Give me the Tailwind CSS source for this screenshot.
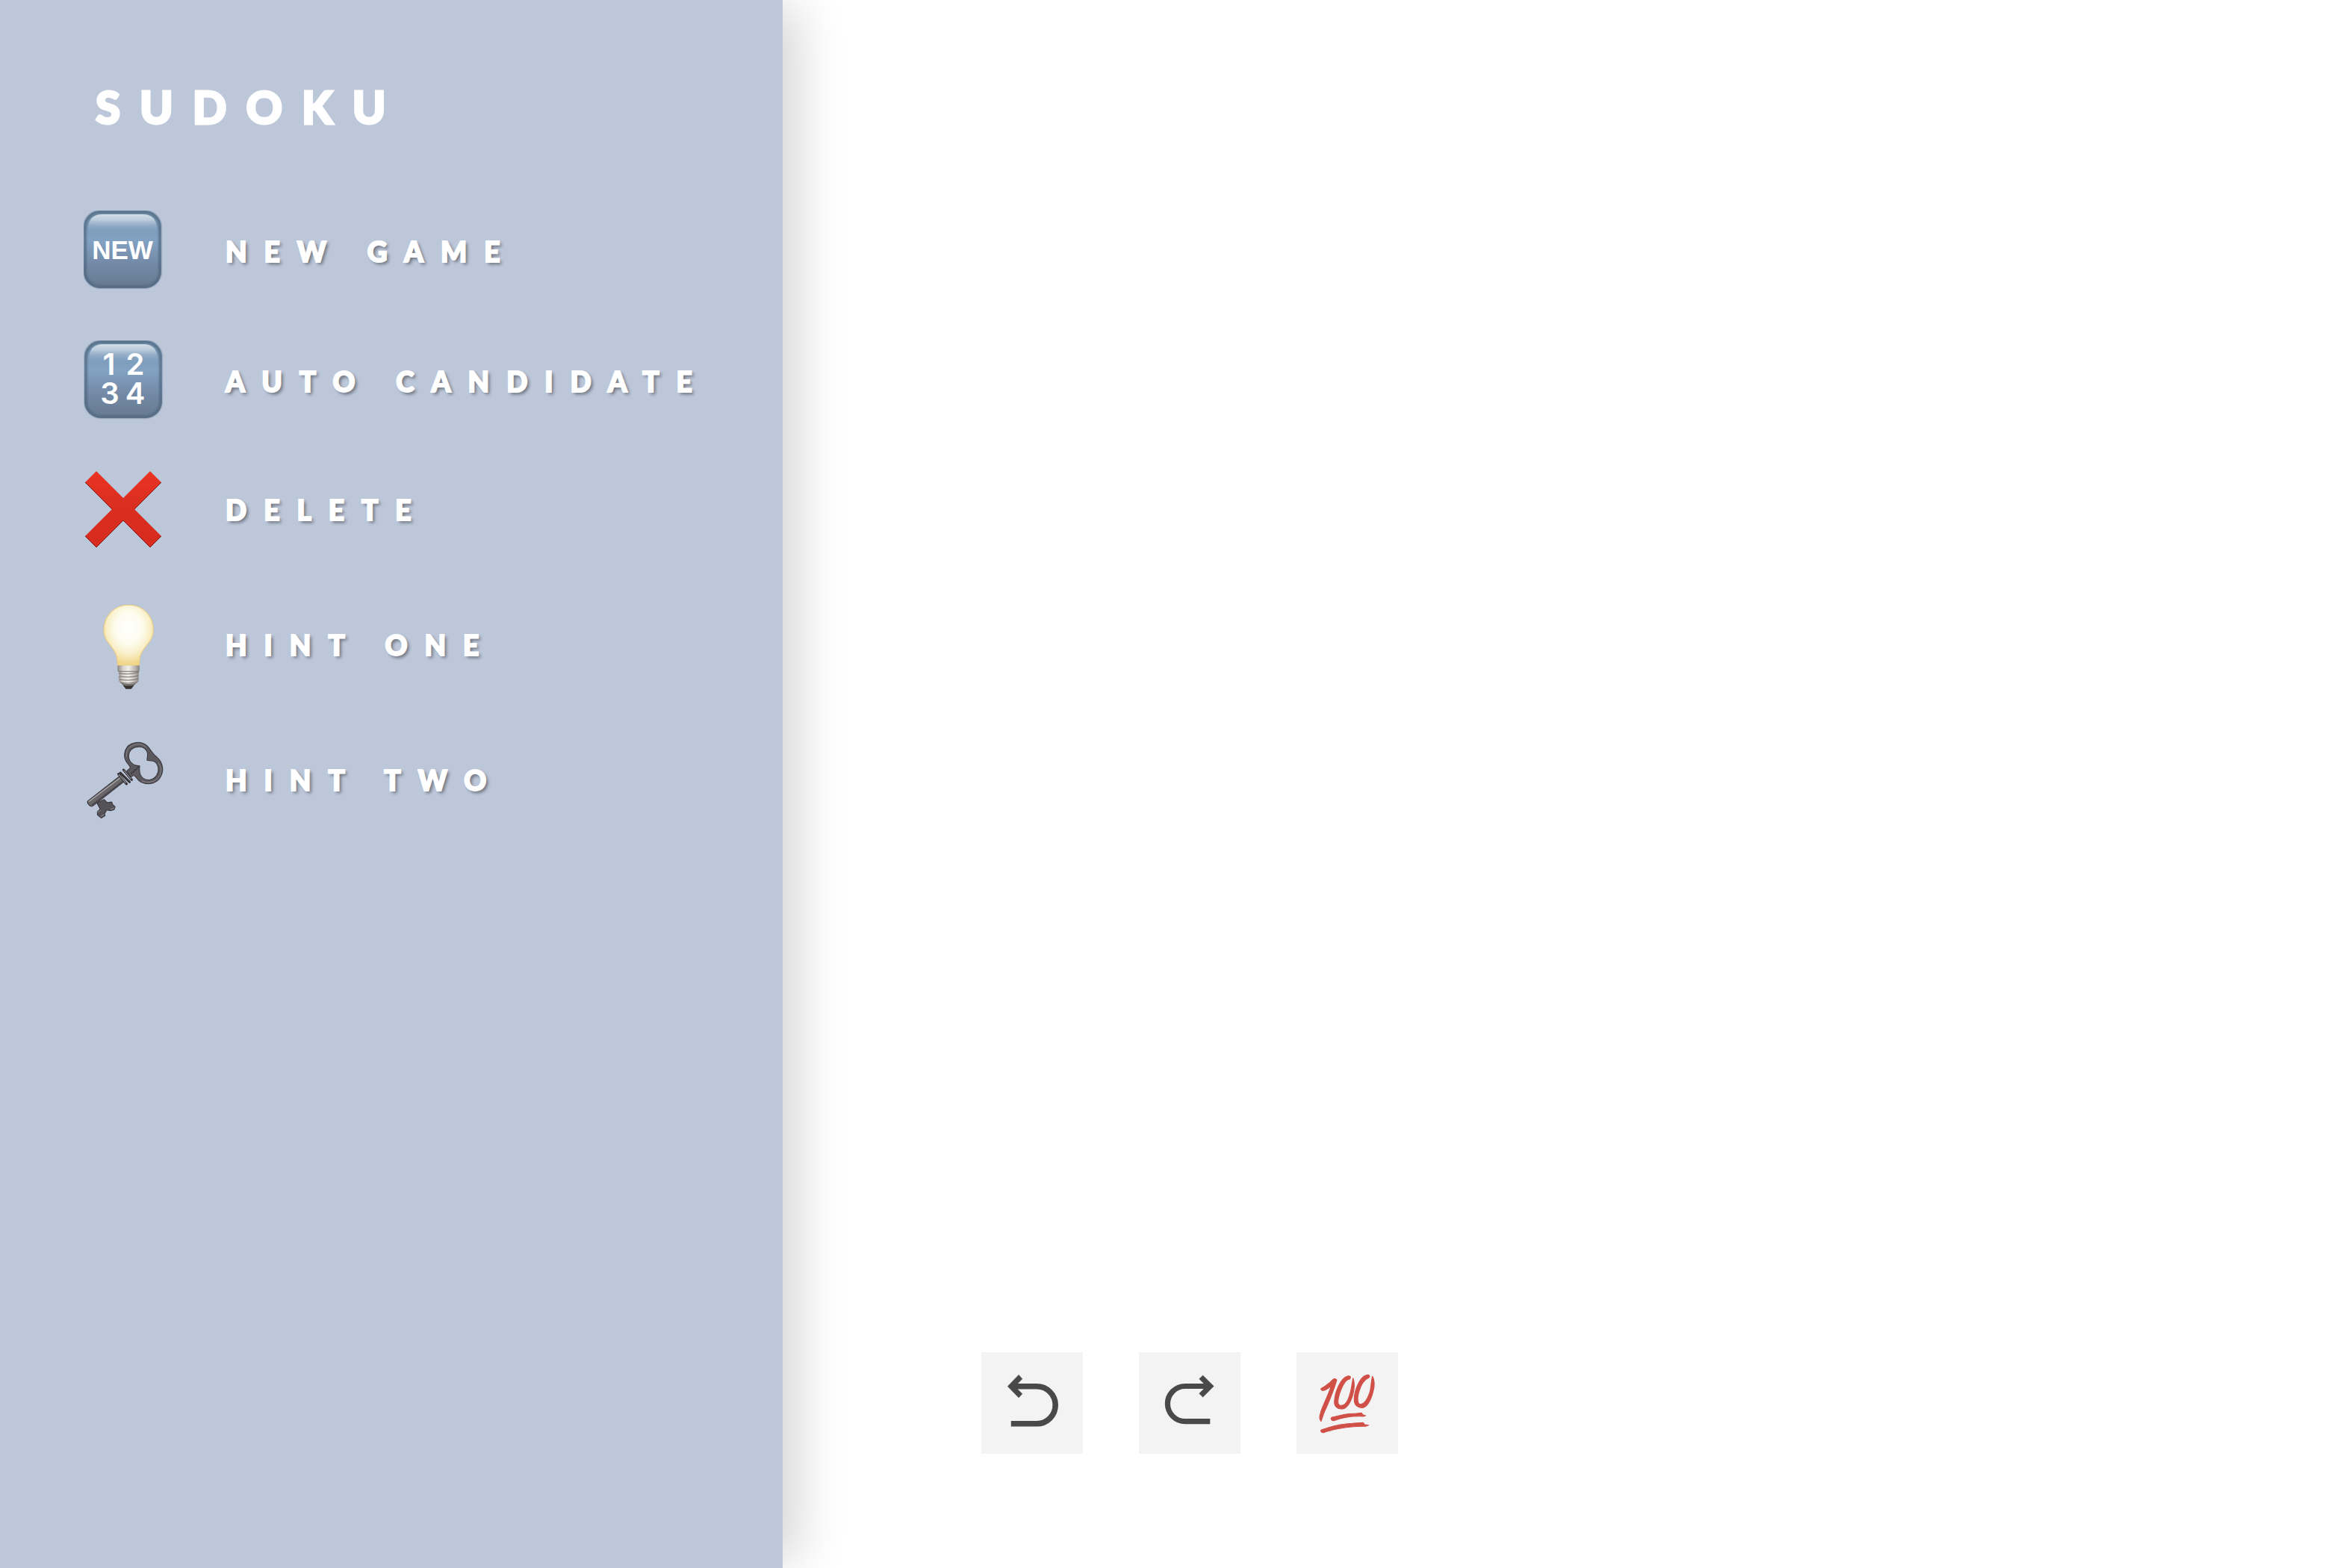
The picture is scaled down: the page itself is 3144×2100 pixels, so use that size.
<!DOCTYPE html>
<html lang="en">
<head>
<meta charset="utf-8">
<meta name="viewport" content="width=device-width, initial-scale=1">
<title>Sudoku</title>
<script src="https://cdn.jsdelivr.net/npm/@tailwindcss/browser@4"></script>
</head>
<body class="flex min-h-screen bg-white font-['Lato',sans-serif] text-white">
  <aside class="w-1/3 shrink-0 bg-[#bcc7da] pl-28 pt-[107px] shadow-[30px_0_60px_-10px_rgba(0,0,0,0.17)]">
    <h1 class="pl-4 text-[60px] leading-[72px] font-black tracking-[26px] [-webkit-text-stroke:3px_white]">SUDOKU</h1>
    <nav class="mt-[103px] flex flex-col items-start gap-16 text-[37px] leading-[48px] font-black tracking-[23px] whitespace-nowrap">
      <button type="button" class="flex items-center gap-[78px]">
        <svg class="h-[110px] w-28" viewBox="0 0 112 110" aria-hidden="true">
          <defs>
            <linearGradient id="tile" x1="0" y1="0" x2="0" y2="1">
              <stop offset="0" stop-color="#7593ae"/><stop offset=".38" stop-color="#83a2c3"/><stop offset=".7" stop-color="#7288a5"/><stop offset="1" stop-color="#66798f"/>
            </linearGradient>
            <linearGradient id="gloss" x1="0" y1="0" x2="0" y2="1">
              <stop offset="0" stop-color="#d3dfe8"/><stop offset=".3" stop-color="#c3d2e0" stop-opacity=".9"/><stop offset="1" stop-color="#83a2c3" stop-opacity="0"/>
            </linearGradient>
            <filter id="soft" x="-10%" y="-10%" width="120%" height="120%"><feGaussianBlur stdDeviation="1"/></filter>
          </defs>
          <rect x="0" y="0" width="104" height="104" rx="22" fill="url(#tile)"/>
          <rect x="2" y="2" width="100" height="100" rx="20" fill="none" stroke="#4f6780" stroke-opacity=".75" stroke-width="4" filter="url(#soft)"/>
          <path d="M6 30V24Q7 5 25 5H79Q97 5 98 24V30Z" fill="url(#gloss)"/>
          <text x="52" y="65" text-anchor="middle" font-family="Liberation Sans, sans-serif" font-weight="700" font-size="35" letter-spacing="0" fill="#fff">NEW</text>
        </svg>
        <span class="[-webkit-text-stroke:2px_white] [text-shadow:3px_3px_4px_rgba(0,0,0,0.45)]">NEW GAME</span>
      </button>
      <button type="button" class="flex items-center gap-[78px]">
        <svg class="h-[110px] w-28" viewBox="0 0 112 110" aria-hidden="true">
          <rect x="1" y="0" width="104" height="104" rx="22" fill="url(#tile)"/>
          <rect x="3" y="2" width="100" height="100" rx="20" fill="none" stroke="#4f6780" stroke-opacity=".75" stroke-width="4" filter="url(#soft)"/>
          <path d="M7 30V24Q8 5 26 5H80Q98 5 99 24V30Z" fill="url(#gloss)"/>
          <g font-family="Inter, sans-serif" font-weight="600" font-size="40" letter-spacing="0" fill="#fff" text-anchor="middle">
            <text x="34" y="46">1</text><text x="69" y="46">2</text><text x="35" y="85">3</text><text x="69" y="85">4</text>
          </g>
        </svg>
        <span class="[-webkit-text-stroke:2px_white] [text-shadow:3px_3px_4px_rgba(0,0,0,0.45)]">AUTO CANDIDATE</span>
      </button>
      <button type="button" class="flex items-center gap-[78px]">
        <svg class="h-[106px] w-28" viewBox="0 0 112 106" aria-hidden="true">
          <defs><linearGradient id="red" x1="0" y1="0" x2="0" y2="1"><stop offset="0" stop-color="#eb3323"/><stop offset=".45" stop-color="#d92e20"/><stop offset="1" stop-color="#d62b1e"/></linearGradient></defs>
          <path d="M2 16L17 1 53 37 89 1 104 16 68 52 104 88 89 103 53 67 17 103 2 88 38 52Z" fill="url(#red)"/>
          <path d="M2 16L38 52M104 16L68 52M2 88L17 103 53 67 89 103 104 88" fill="none" stroke="#7d1d1c" stroke-width="1"/>
        </svg>
        <span class="[-webkit-text-stroke:2px_white] [text-shadow:3px_3px_4px_rgba(0,0,0,0.45)]">DELETE</span>
      </button>
      <button type="button" class="flex items-center gap-[78px]">
        <svg class="h-32 w-28" viewBox="0 0 112 128" aria-hidden="true">
          <defs>
            <radialGradient id="glow" cx=".5" cy=".38" r=".6"><stop offset="0" stop-color="#fff"/><stop offset=".45" stop-color="#fdfcee"/><stop offset=".72" stop-color="#f9efc8"/><stop offset="1" stop-color="#f0d689"/></radialGradient>
            <linearGradient id="metal"><stop offset="0" stop-color="#8c8783"/><stop offset=".25" stop-color="#d8d3cd"/><stop offset=".5" stop-color="#f1eee9"/><stop offset=".8" stop-color="#bbb6b0"/><stop offset="1" stop-color="#87827e"/></linearGradient>
          </defs>
          <g transform="translate(-2 -11) scale(.357 .3333)">
            <path d="M174 64C230 64 267 108 267 165C267 220 217 232 215 290L214 307H133L132 290C130 232 81 220 81 165C81 108 120 64 174 64Z" fill="url(#glow)" stroke="#e9cc83" stroke-width="3"/>
            <path d="M133 307H215V328L210 333 213 340 210 347 213 355 210 362 213 370 193 388H155L137 370 140 362 136 355 140 347 136 340 140 333 133 328Z" fill="url(#metal)"/>
            <path d="M134 331H214M138 338Q180 346 212 334M138 350Q180 358 212 347M138 363Q180 371 212 360M142 374Q174 382 207 373" fill="none" stroke="#77726e" stroke-width="3"/>
            <path d="M144 376Q174 386 206 376L193 388H155Z" fill="#74716f"/>
            <path d="M153 386Q174 390 195 386L184 401H164Z" fill="#35322f"/>
          </g>
        </svg>
        <span class="[-webkit-text-stroke:2px_white] [text-shadow:3px_3px_4px_rgba(0,0,0,0.45)]">HINT ONE</span>
      </button>
      <button type="button" class="flex items-center gap-[78px]">
        <svg class="h-[106px] w-28" viewBox="0 0 112 106" aria-hidden="true">
          <g transform="translate(-12 -23) scale(.3636 .3333)" stroke-linejoin="round" stroke-linecap="round">
            <path fill-rule="evenodd" fill="#5b585e" stroke="#38363a" stroke-width="3" d="M196 162C183 146 181 124 187 106C199 74 242 66 268 91C279 103 286 121 303 135C325 157 331 191 314 218C298 245 259 250 236 229C228 221 225 212 218 208L207 215 192 191 205 178C203 171 200 167 196 162ZM205 153C218 169 226 170 239 170C239 184 236 199 246 213C262 234 290 229 302 208C315 184 305 158 291 152C280 147 273 151 267 148C265 140 272 127 266 112C256 90 226 89 210 103C196 117 196 138 205 153Z"/>
            <path d="M191 132Q188 108 205 93Q235 72 262 94M309 158Q329 191 306 221Q280 246 247 230" fill="none" stroke="#98959a" stroke-width="2"/>
            <path d="M208 202L238 172" stroke="#3b383c" stroke-width="4"/>
            <path d="M48 312L166 211 183 232 67 331Q58 336 51 325 45 317 48 312Z" fill="#69666a" stroke="#353236" stroke-width="3"/>
            <path d="M53 313L167 219" fill="none" stroke="#aaa7a8" stroke-width="4"/>
            <path d="M64 327L180 230" fill="none" stroke="#454145" stroke-width="4"/>
            <path d="M161 203L191 243M168 198L202 235M180 186L210 226" fill="none" stroke="#363338" stroke-width="9"/>
            <path d="M163 205L188 238M182 189L207 222" fill="none" stroke="#99969a" stroke-width="3"/>
            <path d="M82 319L108 305 120 318 136 315 140 326 149 335 145 346 132 350 118 347 110 362 112 370 98 380 84 367 83 355 94 344Z" fill="#565358" stroke="#333136" stroke-width="3"/>
            <path d="M84 356L95 349M96 374L108 366M133 345L145 339" stroke="#89868b" stroke-width="3"/>
          </g>
        </svg>
        <span class="[-webkit-text-stroke:2px_white] [text-shadow:3px_3px_4px_rgba(0,0,0,0.45)]">HINT TWO</span>
      </button>
    </nav>
  </aside>
  <main class="flex grow items-end gap-[75px] pb-[153px] pl-[266px]">
    <button type="button" aria-label="Undo" class="size-[136px] bg-[#f3f3f3]">
      <svg class="size-full" viewBox="0 0 136 136" aria-hidden="true">
        <path d="M45 45.8H74.2a25 25 0 0 1 0 50H39.8" fill="none" stroke="#484948" stroke-width="7.6"/>
        <path d="M35.2 45.7L50.1 30.3 54.9 35.7 45 45.8 54.9 55.7 50.1 61Z" fill="#484948" stroke="#484948" stroke-width=".4"/>
      </svg>
    </button>
    <button type="button" aria-label="Redo" class="size-[136px] bg-[#f3f3f3]">
      <svg class="size-full" viewBox="0 0 136 136" aria-hidden="true">
        <path d="M91 45.5H62a23.6 23.6 0 0 0 0 47.2H95.3" fill="none" stroke="#484948" stroke-width="7.2"/>
        <path d="M100.3 45.6L85.7 31 80.7 35.7 90.5 45.6 80.7 55.3 85.7 60.2Z" fill="#484948" stroke="#484948" stroke-width=".4"/>
      </svg>
    </button>
    <button type="button" aria-label="Check" class="size-[136px] bg-[#f3f3f3]">
      <svg class="size-full" viewBox="0 0 136 136" aria-hidden="true">
        <g transform="scale(.3827 .3333) translate(-1168 -93)" fill="#d05048" stroke="#d05048" stroke-width="3" stroke-linejoin="round">
          <path d="M1255 238C1266 232 1284 216 1294 204C1299 197 1310 199 1308 208C1301 235 1285 283 1272 317C1264 335 1260 350 1254 371C1249 364 1248 350 1252 338C1256 315 1276 275 1289 230C1280 237 1269 247 1260 247C1254 247 1252 240 1255 238Z"/>
          <path d="M1347 189C1358 186 1360 196 1353 202C1340 202 1328 230 1319 258C1313 280 1310 301 1319 306C1331 310 1342 300 1349 281C1361 249 1361 224 1366 197C1372 215 1371 240 1365 265C1356 298 1344 319 1329 321C1309 323 1299 308 1301 288C1302 260 1320 197 1347 189Z"/>
          <path d="M1412 185C1424 181 1427 191 1419 197C1403 204 1391 233 1385 258C1380 282 1382 301 1392 302C1407 302 1416 281 1424 256C1430 233 1429 208 1434 190C1442 207 1441 232 1436 252C1428 286 1415 312 1402 316C1384 318 1370 307 1370 284C1369 253 1388 193 1412 185Z"/>
          <path d="M1291 355C1316 347 1350 338 1372 340L1396 337 1400 344 1410 348 1401 351C1366 349 1332 354 1300 368C1290 370 1286 359 1291 355Z"/>
          <path d="M1255 405C1284 393 1325 381 1362 379L1401 376 1407 384 1421 386 1410 391C1365 389 1307 398 1264 416C1254 418 1251 409 1255 405Z"/>
        </g>
      </svg>
    </button>
  </main>
</body>
</html>
